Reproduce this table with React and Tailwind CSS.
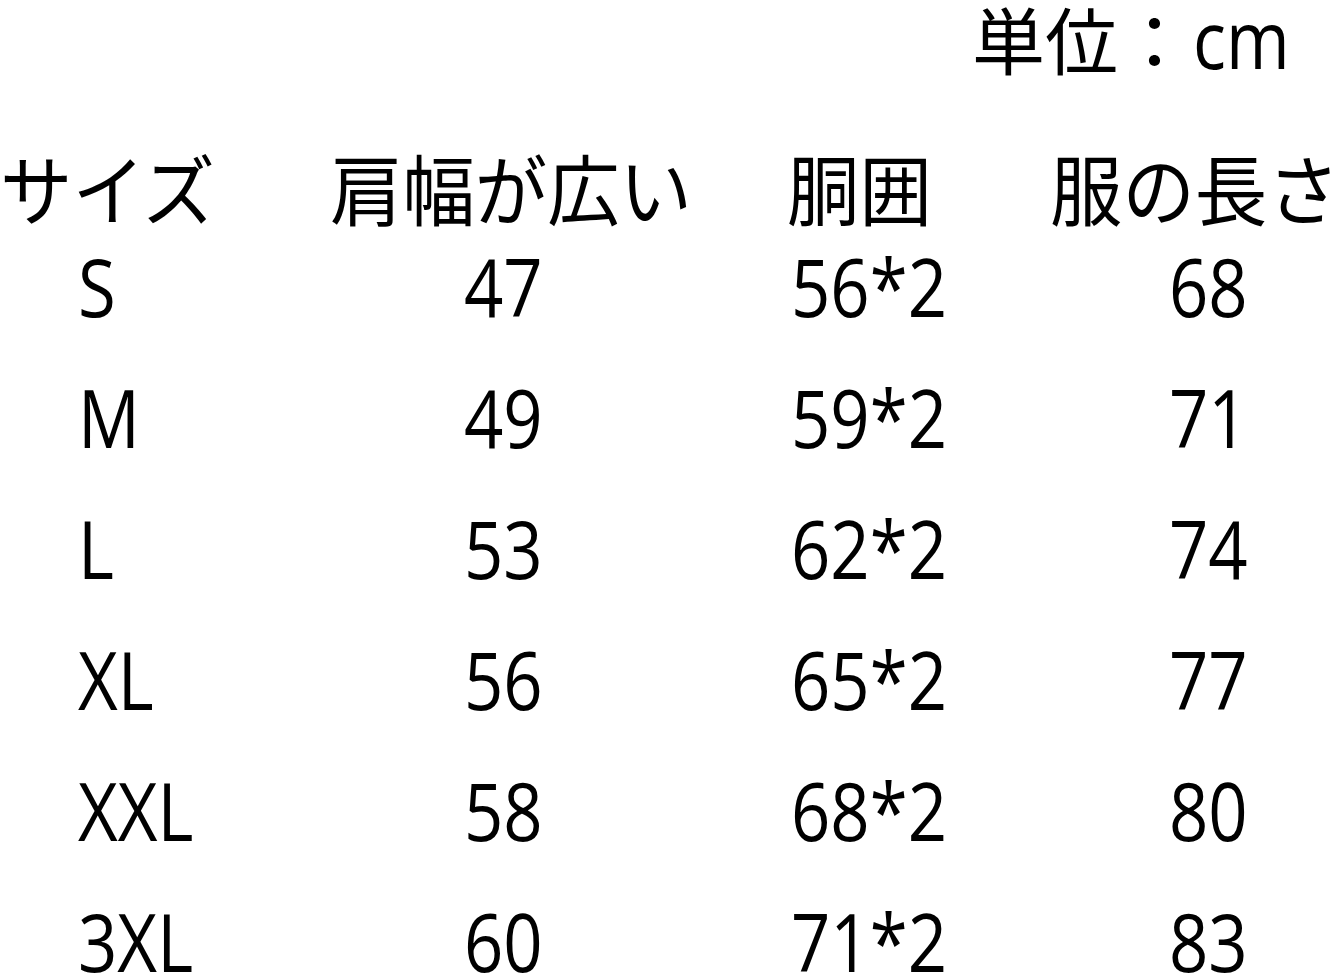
const rows = [
  ['S', '47', '56*2', '68'],
  ['M', '49', '59*2', '71'],
  ['L', '53', '62*2', '74'],
  ['XL', '56', '65*2', '77'],
  ['XXL', '58', '68*2', '80'],
  ['3XL', '60', '71*2', '83'],
];

const jp = "font-['Noto_Sans_CJK_JP',sans-serif]";

function Num({ children }) {
  return (
    <span className="inline-block origin-left scale-x-[0.85] font-['Open_Sans',sans-serif] text-[81px] leading-none whitespace-nowrap">
      {children}
    </span>
  );
}

function Head({ children }) {
  return (
    <span className={`${jp} inline-block origin-left scale-x-[0.94] text-[77px] leading-none whitespace-nowrap`}>
      {children}
    </span>
  );
}

export default function App() {
  return (
    <div className="w-[1337px] h-[974px] bg-white text-black overflow-hidden">
      <div className="h-[80px] pl-[972px] whitespace-nowrap">
        <div className="flex items-baseline -mt-[3px]">
          <span className={`${jp} text-[73px] leading-none`}>単位：</span>
          <span className="pl-[2px]"><Num>cm</Num></span>
        </div>
      </div>

      <div className="flex pt-[71px] h-[168px]">
        <div className="w-[330px] shrink-0"><Head>サイズ</Head></div>
        <div className="w-[457px] shrink-0"><Head>肩幅が広い</Head></div>
        <div className="w-[263px] shrink-0"><Head>胴囲</Head></div>
        <div className="shrink-0"><Head>服の長さ</Head></div>
      </div>

      {rows.map((r) => (
        <div key={r[0]} className="flex h-[131px]">
          <div className="w-[330px] shrink-0 pl-[78px]"><Num>{r[0]}</Num></div>
          <div className="w-[457px] shrink-0 pl-[134px]"><Num>{r[1]}</Num></div>
          <div className="w-[263px] shrink-0 pl-[4px]"><Num>{r[2]}</Num></div>
          <div className="shrink-0 pl-[119px]"><Num>{r[3]}</Num></div>
        </div>
      ))}
    </div>
  );
}
